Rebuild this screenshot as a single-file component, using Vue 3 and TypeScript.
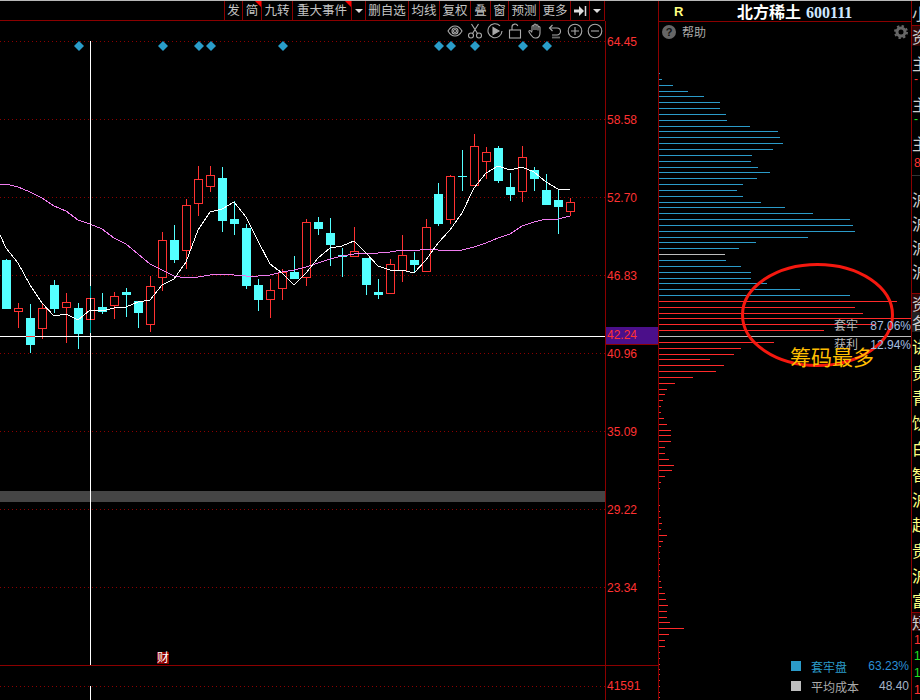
<template>
  <div class="terminal">
    <section class="left">
      <div class="toolbar">
        <div class="tools">
          <div v-for="tool in tools" :key="tool.id" class="tool" :class="{ flagged: tool.flag }">
            <i v-if="tool.id.startsWith('drop')" class="caret"></i>
            <svg v-else-if="tool.id === 'exit'" width="14" height="12" viewBox="0 0 14 12"><path d="M1 4.5h5V1l5 5-5 5V7.500H1z" fill="#ddd" /><path d="M12.500 1v10" stroke="#ddd" stroke-width="1.500" /></svg>
            <template v-else>{{ tool.id }}</template>
          </div>
        </div>
      </div>

      <div class="chart-row">
        <div class="plot">
          <svg class="plot-svg" width="605" height="679" viewBox="0 21 605 679" shape-rendering="crispEdges">
            <line v-for="y in gridYs" :key="y" x1="0" :y1="y + 0.5" x2="605" :y2="y + 0.5" class="grid-line" />
            <rect x="0" y="491" width="605" height="11" fill="#454545" />

            <polygon
              v-for="x in eventXs"
              :key="x"
              :points="`${x},41 ${x + 5},46 ${x},51 ${x - 5},46`"
              fill="#2a9dc9"
              shape-rendering="auto"
            />

            <g v-for="c in candles" :key="c.x">
              <rect :x="c.x" :y="c.hi" width="1" :height="c.lo - c.hi" :fill="c.color" />
              <rect
                v-if="c.up"
                :x="c.x - 3.5"
                :y="c.top + 0.5"
                width="8"
                :height="Math.max(c.bot - c.top - 1, 1)"
                fill="#000"
                :stroke="c.color"
              />
              <rect v-else :x="c.x - 4" :y="c.top" width="9" :height="Math.max(c.bot - c.top, 1)" :fill="c.color" />
            </g>

            <polyline :points="ma20" fill="none" stroke="#f07cf0" />
            <polyline :points="ma5" fill="none" stroke="#fff" />

            <rect x="0" y="336" width="605" height="1" fill="#fff" />
            <rect x="26" y="336" width="9" height="1" fill="#ff3232" />
            <rect x="90" y="41" width="1" height="624" fill="#fff" />
            <rect x="90" y="686" width="1" height="14" fill="#fff" />
            <rect x="90" y="286" width="1" height="12" fill="#00a8a8" />
            <rect x="90" y="320" width="1" height="13" fill="#00a8a8" />

            <rect x="0" y="665" width="605" height="1" fill="#8b0000" />
            <rect x="157" y="652" width="12" height="12" fill="#8b0000" />
            <text x="157" y="662" class="badge-text">财</text>
          </svg>

          <div class="tool-icons">
            <svg viewBox="0 0 16 16"><path d="M1 8c2-3.500 4.300-5 7-5s5 1.500 7 5c-2 3.500-4.300 5-7 5s-5-1.500-7-5z" /><circle cx="8" cy="8" r="3" /><circle cx="8" cy="8" r="1.500" /></svg>
            <svg viewBox="0 0 16 16"><circle cx="4" cy="12.500" r="2.500" /><circle cx="12" cy="12.500" r="2.500" /><path d="M5.500 10.500 11.500 1M10.500 10.500 4.500 1" /></svg>
            <svg viewBox="0 0 16 16"><path d="M13 2.800A7 7 0 1 0 15 8" /><path d="M6 4.500 12 8l-6 3.500z" fill="#aaa" /></svg>
            <svg viewBox="0 0 16 16"><rect x="2.500" y="7" width="11" height="8" /><path d="M5 7V4a3 3 0 0 1 5.800-1" /></svg>
            <svg viewBox="0 0 16 16"><path d="M5 8.500V3.500a1 1 0 0 1 2 0V7M7 7V2a1 1 0 0 1 2 0v5M9 7V2.800a1 1 0 0 1 2 0V7.500M11 7.500V4.500a1 1 0 0 1 2 0V10c0 3-1.500 5-4 5H8c-2 0-3-1.500-4-3L2 9c-.5-1 .8-2 1.700-1L5 9.500" /></svg>
            <svg viewBox="0 0 16 16"><path d="M5.500 2 2.500 5l3 3" /><path d="M2.500 5H10a3.500 3.500 0 0 1 3.500 3.500v0A3.500 3.500 0 0 1 10 12H5" /><path d="M5 14.500h8" stroke-width="1.800" stroke="#666" /></svg>
            <svg viewBox="0 0 16 16"><circle cx="8" cy="8" r="6.800" /><path d="M4 8h8M8 4v8" /></svg>
            <svg viewBox="0 0 16 16"><circle cx="8" cy="8" r="6.800" /><path d="M4 8h8" /></svg>
          </div>
        </div>

        <div class="axis">
          <div class="axis-price">
            <span v-for="t in priceTicks" :key="t.label" class="tick" :style="{ top: `${t.y - 29}px` }">{{ t.label }}</span>
            <span class="tick current">42.24</span>
          </div>
          <div class="axis-volume"><span>41591</span></div>
        </div>
      </div>
    </section>

    <section class="panel">
      <header class="panel-head">
        <span class="flag">R</span>
        <span class="stock">北方稀土<b>600111</b></span>
      </header>
      <div class="help-row">
        <span class="help-icon">?</span>
        <span class="help-text">帮助</span>
        <svg class="gear" width="14" height="14" viewBox="0 0 14 14">
          <circle cx="7" cy="7" r="4" fill="none" stroke="#666" stroke-width="3" />
          <circle cx="7" cy="7" r="6" fill="none" stroke="#666" stroke-width="2" stroke-dasharray="2.350 2.350" />
        </svg>
      </div>
      <div class="chips">
        <svg class="chips-svg" width="252" height="658" viewBox="659 42 252 658" shape-rendering="crispEdges">
          <rect v-for="b in chipBars" :key="b.y" x="659" :y="b.y" :width="b.w" height="1" :fill="b.color" />
          <ellipse cx="817.500" cy="315" rx="75" ry="50.500" fill="none" stroke="#f5180f" stroke-width="3" shape-rendering="auto" />
        </svg>
        <div class="cost-stats">
          <div class="cost-row"><span>套牢</span><em>87.06%</em></div>
          <div class="cost-row"><span>获利</span><em>12.94%</em></div>
        </div>
        <div class="note">筹码最多</div>
        <div class="legend">
          <div class="legend-row blue"><i></i><span>套牢盘</span><em>63.23%</em></div>
          <div class="legend-row gray"><i></i><span>平均成本</span><em>48.40</em></div>
        </div>
      </div>
    </section>

    <aside class="strip">
      <div v-for="(row, i) in stripRows" :key="i" class="strip-row" :class="row.kind" :style="{ height: `${row.h}px` }">{{ row.text }}</div>
    </aside>
  </div>
</template>

<script setup lang="ts">
interface Tool {
  id: string
  flag?: boolean
}

const tools: Tool[] = [
  { id: '发' },
  { id: '简', flag: true },
  { id: '九转' },
  { id: '重大事件', flag: true },
  { id: 'drop-events' },
  { id: '删自选' },
  { id: '均线' },
  { id: '复权' },
  { id: '叠' },
  { id: '窗' },
  { id: '预测' },
  { id: '更多' },
  { id: 'exit' },
  { id: 'drop-more' }
]

const gridYs = [41, 119, 197, 275, 353, 431, 509, 587, 686]
const eventXs = [79, 163, 199, 211, 283, 439, 451, 475, 523, 547]

const priceTicks = [
  { label: '64.45', y: 42 },
  { label: '58.58', y: 120 },
  { label: '52.70', y: 198 },
  { label: '46.83', y: 276 },
  { label: '40.96', y: 354 },
  { label: '35.09', y: 432 },
  { label: '29.22', y: 510 },
  { label: '23.34', y: 588 }
]

// candle rows are [up, high, bodyTop, bodyBottom, low], measured at 3x from y = 130
const px = (v: number) => Math.round(130 + v / 3)

const rawCandles: [number, number, number, number, number][] = [
  [0, 387, 390, 537, 537],
  [1, 519, 535, 545, 594],
  [0, 522, 564, 645, 669],
  [1, 520, 535, 596, 627],
  [0, 450, 465, 537, 549],
  [1, 489, 517, 533, 639],
  [0, 519, 534, 612, 657],
  [1, 468, 505, 569, 609],
  [0, 489, 531, 545, 552],
  [1, 486, 499, 527, 567],
  [0, 474, 486, 495, 561],
  [0, 513, 514, 549, 594],
  [1, 438, 469, 584, 606],
  [1, 306, 331, 443, 483],
  [0, 285, 330, 390, 399],
  [1, 207, 226, 362, 417],
  [1, 108, 148, 221, 258],
  [1, 108, 136, 170, 186],
  [0, 111, 144, 273, 306],
  [0, 213, 267, 282, 315],
  [0, 282, 294, 468, 477],
  [0, 447, 465, 510, 543],
  [1, 447, 481, 509, 564],
  [1, 417, 427, 476, 510],
  [0, 378, 426, 447, 447],
  [1, 267, 277, 443, 468],
  [0, 261, 276, 297, 315],
  [0, 264, 309, 345, 408],
  [0, 354, 375, 381, 441],
  [1, 291, 364, 380, 381],
  [0, 384, 384, 465, 495],
  [0, 447, 486, 495, 507],
  [1, 387, 403, 491, 492],
  [1, 315, 376, 423, 456],
  [0, 366, 390, 405, 429],
  [1, 267, 292, 425, 426],
  [0, 159, 192, 282, 288],
  [1, 135, 139, 269, 282],
  [0, 60, 138, 141, 183],
  [1, 12, 49, 167, 168],
  [1, 51, 67, 95, 147],
  [0, 48, 54, 153, 159],
  [0, 129, 171, 195, 213],
  [1, 48, 82, 185, 216],
  [0, 111, 120, 147, 183],
  [0, 132, 180, 225, 225],
  [0, 177, 210, 231, 312],
  [1, 204, 217, 245, 258]
]

const candles = rawCandles.map(([up, hi, top, bot, lo], i) => ({
  x: 6 + i * 12,
  up: up === 1,
  color: up === 1 ? '#ff3232' : '#54ffff',
  hi: px(hi),
  top: px(top),
  bot: px(bot),
  lo: px(lo)
}))

const ma20Raw = [
  163, 163, 171, 186, 203, 229, 243, 270, 282, 298, 323, 342, 372, 401, 419, 438, 445, 441, 436, 433, 434, 439, 439, 436,
  427, 421, 411, 399, 388, 379, 372, 370, 370, 365, 359, 362, 358, 361, 361, 361, 350, 340, 325, 313, 288, 277, 266, 266, 259
]
const ma5Raw = [
  316, 354, 398, 465, 520, 559, 552, 571, 541, 543, 535, 532, 515, 510, 466, 447, 395, 300, 246, 237, 215, 262, 333, 403,
  430, 466, 430, 383, 355, 349, 334, 370, 408, 421, 421, 430, 390, 340, 300, 250, 175, 130, 109, 120, 110, 125, 157, 177, 181
]

const toPoints = (raw: number[]) => raw.map((v, i) => `${i === 0 ? 0 : i * 12 - 6},${px(v)}`).join(' ')
const ma20 = toPoints(ma20Raw)
const ma5 = toPoints(ma5Raw)

const BLUE = '#2b9bc9'
const RED = '#ff2a2a'
const GRAY = '#bdbdbd'

const blueChips = [
  [73, 1], [79, 3], [85, 14], [91, 29], [96, 45], [102, 61], [108, 61], [114, 67], [120, 68], [126, 91], [131, 119], [137, 121],
  [143, 124], [149, 114], [155, 93], [161, 92], [167, 99], [172, 111], [178, 98], [184, 84], [190, 78], [196, 84], [202, 102],
  [207, 126], [213, 154], [219, 191], [225, 194], [231, 196], [237, 149], [242, 97], [248, 80], [260, 67], [266, 82], [272, 92],
  [278, 92], [283, 108], [289, 141], [295, 191]
]
const redChips = [
  [301, 238], [307, 196], [313, 204], [318, 252], [324, 216], [330, 165], [342, 115], [348, 82], [354, 75], [359, 51], [365, 65],
  [371, 57], [377, 34], [383, 16], [389, 8], [394, 6], [400, 4], [406, 2], [412, 2], [418, 5], [424, 8], [430, 12], [435, 12],
  [441, 12], [447, 6], [453, 6], [459, 10], [465, 15], [470, 13], [476, 6], [482, 2], [488, 1], [505, 1], [511, 1], [517, 2],
  [523, 3], [529, 2], [535, 8], [541, 4], [546, 2], [552, 1], [558, 1], [564, 1], [570, 1], [576, 1], [581, 2], [587, 3], [593, 6],
  [599, 7], [605, 9], [611, 8], [617, 8], [622, 11], [628, 25], [634, 10], [640, 6], [646, 6], [652, 1], [658, 1], [664, 1],
  [669, 1], [674, 1], [680, 1], [686, 1], [692, 1], [697, 1]
]

const chipBars = [
  ...blueChips.map(([y, w]) => ({ y, w, color: BLUE })),
  ...redChips.map(([y, w]) => ({ y, w, color: RED })),
  { y: 254, w: 66, color: GRAY },
  { y: 336, w: 252, color: GRAY }
]

// first letters of the neighbouring list, clipped by the window edge
const stripRows: { text: string; h: number; kind?: string }[] = [
  { text: '小', h: 25, kind: 'head' },
  { text: '资', h: 20, kind: 'dark' },
  { text: '', h: 8 },
  { text: '主', h: 18, kind: 'muted' },
  { text: '-', h: 14, kind: 'red num' },
  { text: '', h: 9 },
  { text: '主', h: 18, kind: 'muted' },
  { text: '-', h: 12, kind: 'green num' },
  { text: '', h: 9 },
  { text: '主', h: 18, kind: 'muted' },
  { text: '', h: 4 },
  { text: '8', h: 14, kind: 'red num' },
  { text: '', h: 6, kind: 'rule' },
  { text: '', h: 11 },
  { text: '沪', h: 24, kind: 'muted' },
  { text: '沪', h: 24, kind: 'muted' },
  { text: '沪', h: 24, kind: 'muted' },
  { text: '沪', h: 24, kind: 'muted' },
  { text: '', h: 11, kind: 'ruled' },
  { text: '资', h: 18, kind: 'dark' },
  { text: '各', h: 20, kind: 'hover' },
  { text: '讲', h: 27, kind: 'yellow' },
  { text: '贵', h: 25, kind: 'yellow' },
  { text: '青', h: 25, kind: 'yellow' },
  { text: '饮', h: 26, kind: 'yellow' },
  { text: '白', h: 26, kind: 'yellow' },
  { text: '智', h: 25, kind: 'yellow' },
  { text: '沪', h: 25, kind: 'yellow' },
  { text: '起', h: 26, kind: 'yellow' },
  { text: '贵', h: 25, kind: 'yellow' },
  { text: '沪', h: 25, kind: 'yellow' },
  { text: '富', h: 26, kind: 'yellow ruled' },
  { text: '短', h: 18, kind: 'dark' },
  { text: '1', h: 17, kind: 'red num' },
  { text: '1', h: 16, kind: 'green num' },
  { text: '1', h: 18, kind: 'green num' },
  { text: '1', h: 16, kind: 'red num' }
]
</script>

<style>
html,
body {
  margin: 0;
  background: #000;
}
</style>

<style scoped>
.terminal {
  display: flex;
  width: 920px;
  height: 700px;
  box-sizing: border-box;
  border-top: 1px solid #b8b8b8;
  overflow: hidden;
  background: #000;
  color: #bbb;
  font-family: "Liberation Sans", "Noto Sans CJK SC", sans-serif;
  font-size: 12px;
}

.left {
  display: flex;
  flex-direction: column;
  width: 659px;
  box-sizing: border-box;
  border-right: 1px solid #8b0000;
}

.toolbar {
  display: flex;
  justify-content: flex-end;
  width: 605px;
  height: 20px;
  box-sizing: border-box;
  border-bottom: 1px solid #8b0000;
}

.tools {
  display: grid;
  grid-template-columns: 18px 19px 31px 59px 14px 43px 31px 31px 20px 18px 31px 31px 19px 15px;
  border-left: 1px solid #8b0000;
}

.tool {
  position: relative;
  display: flex;
  align-items: center;
  justify-content: center;
  box-sizing: border-box;
  border-right: 1px solid #8b0000;
  font-family: "Noto Sans CJK SC", sans-serif;
  font-size: 12.500px;
  line-height: 1;
  color: #c4c4c4;
}

.tool.flagged::after {
  content: "";
  position: absolute;
  top: 0;
  right: 0;
  border-top: 6px solid #f00;
  border-left: 6px solid transparent;
}

.caret {
  border-top: 4px solid #ddd;
  border-left: 4px solid transparent;
  border-right: 4px solid transparent;
}

.chart-row {
  display: flex;
  flex: 1;
  min-height: 0;
}

.plot {
  position: relative;
  width: 605px;
}

.plot-svg {
  display: block;
}

.grid-line {
  stroke: #8b0000;
  stroke-dasharray: 1 3;
}

.badge-text {
  fill: #fff;
  font-family: "Noto Sans CJK SC", sans-serif;
  font-size: 12px;
}

.tool-icons {
  position: absolute;
  top: 2px;
  right: 0;
  display: flex;
}

.tool-icons svg {
  width: 16px;
  height: 16px;
  padding: 0 2px;
  fill: none;
  stroke: #aaa;
  stroke-width: 1.100;
}

.axis {
  display: flex;
  flex-direction: column;
  width: 53px;
  box-sizing: border-box;
  border-left: 1px solid #8b0000;
  color: #ff3232;
}

.axis-price {
  position: relative;
  height: 645px;
  box-sizing: border-box;
  border-bottom: 1px solid #8b0000;
}

.tick {
  position: absolute;
  left: 1px;
  line-height: 16px;
}

.current {
  top: 306px;
  left: 0;
  right: 0;
  height: 17px;
  padding-left: 1px;
  background: #4b0f8a;
  border-bottom: 1px solid #8b0000;
}

.axis-volume {
  padding: 12px 0 0 1px;
  line-height: 16px;
}

.panel {
  display: flex;
  flex-direction: column;
  width: 252px;
}

.panel-head {
  display: flex;
  align-items: center;
  height: 21px;
  box-sizing: border-box;
  padding-left: 15px;
  border-bottom: 1px solid #8b0000;
}

.flag {
  width: 63px;
  color: #ffff80;
  font-weight: 700;
  font-size: 13px;
}

.stock {
  color: #fff;
  font-family: "Noto Sans CJK SC", sans-serif;
  font-size: 16px;
  font-weight: 700;
  white-space: nowrap;
}

.stock b {
  margin-left: 5px;
  color: #cfe8ff;
  font-family: "Liberation Serif", serif;
}

.help-row {
  display: flex;
  align-items: center;
  height: 20px;
  padding: 0 3px;
}

.help-icon {
  width: 14px;
  height: 14px;
  border-radius: 50%;
  background: #666;
  color: #111;
  font-size: 11px;
  font-weight: 700;
  line-height: 14px;
  text-align: center;
}

.help-text {
  flex: 1;
  margin: 0 0 2px 6px;
  color: #aaa;
  font-family: "Noto Sans CJK SC", sans-serif;
}

.chips {
  position: relative;
  display: flex;
  flex: 1;
  flex-direction: column;
  justify-content: flex-end;
}

.chips-svg {
  position: absolute;
  top: 0;
  left: 0;
}

.cost-stats {
  position: absolute;
  top: 275px;
  right: 0;
  width: 77px;
}

.cost-row {
  display: flex;
  justify-content: space-between;
  height: 19px;
  line-height: 19px;
  font-family: "Liberation Sans", "Noto Sans CJK SC", sans-serif;
}

.cost-row em,
.legend-row em {
  font-style: normal;
}

.cost-row em {
  color: #a4bfe0;
}

.note {
  position: absolute;
  top: 300px;
  left: 131px;
  color: #ffbe00;
  font-family: "Noto Sans CJK SC", sans-serif;
  font-size: 21px;
  line-height: 28px;
  white-space: nowrap;
}

.legend {
  position: relative;
  padding: 0 2px 4px 132px;
}

.legend-row {
  display: flex;
  align-items: center;
  height: 20px;
}

.legend-row i {
  width: 10px;
  height: 10px;
  margin-right: 10px;
  background: currentColor;
}

.legend-row span {
  flex: 1;
}

.legend-row.blue {
  color: #2b9bc9;
}

.legend-row.blue em {
  color: #2a8fd6;
}

.legend-row.gray {
  color: #bdbdbd;
}

.legend-row.gray span {
  color: #aaa;
}

.legend-row.gray em {
  color: #a4b4c8;
}

.strip {
  width: 9px;
  box-sizing: border-box;
  border-left: 1px solid #8b0000;
  overflow: hidden;
}

.strip-row {
  display: flex;
  align-items: center;
  box-sizing: border-box;
  width: 20px;
  overflow: hidden;
  color: #ccc;
  font-family: "Noto Sans CJK SC", sans-serif;
  font-size: 16px;
  white-space: nowrap;
}

.strip-row.head {
  border-bottom: 1px solid #8b0000;
}

.strip-row.dark {
  background: #2c0606;
}

.strip-row.hover {
  background: #222;
}

.strip-row.rule {
  border-bottom: 1px solid #333;
}

.strip-row.ruled {
  border-bottom: 1px solid #8b0000;
}

.strip-row.yellow {
  color: #ffff80;
}

.strip-row.num {
  padding-left: 2px;
  font-family: "Liberation Sans", sans-serif;
  font-size: 12px;
}

.strip-row.red {
  color: #ff3232;
}

.strip-row.green {
  color: #22e022;
}
</style>
